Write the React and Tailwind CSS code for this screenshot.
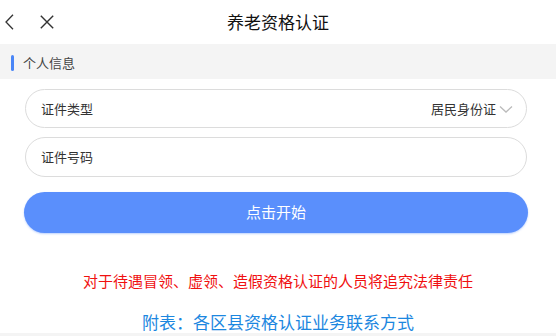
import React from 'react';

const App = () => {
  return (
    <div className="w-[556px] h-[336px] bg-white overflow-hidden flex flex-col font-['Noto_Sans_CJK_SC','Noto_Sans',sans-serif] text-[#333]">
      {/* Header */}
      <header className="h-[44px] flex items-center relative shrink-0 pl-[5px]">
        <button className="h-[44px] flex items-center">
          <svg width="9" height="16" viewBox="0 0 9 16" fill="none" stroke="#333" strokeWidth="1.3">
            <path d="M8 0.8 L1 8 L8 15.2" />
          </svg>
        </button>
        <button className="h-[44px] flex items-center ml-[26px]">
          <svg width="14" height="14" viewBox="0 0 14 14" fill="none" stroke="#333" strokeWidth="1.4">
            <path d="M0.8 0.8 L13.2 13.2 M13.2 0.8 L0.8 13.2" />
          </svg>
        </button>
        <h1 className="absolute inset-x-0 text-center text-[17px] leading-[44px] text-[#111] pointer-events-none">养老资格认证</h1>
      </header>

      {/* Section title */}
      <div className="h-[35px] bg-[#f4f4f4] flex items-center pl-[11px] pt-[2px] shrink-0">
        <span className="w-[3px] h-[16px] bg-[#4a86f7] rounded-sm"></span>
        <span className="ml-[9px] text-[13px] text-[#444]">个人信息</span>
      </div>

      {/* Form */}
      <div className="pl-[25px] pr-[29px] pt-[10px] flex flex-col">
        <div className="h-[39px] border border-[#dcdcdc] rounded-full flex items-center justify-between pl-[15px] pr-[13px] text-[13px]">
          <span>证件类型</span>
          <span className="flex items-center">
            居民身份证
            <svg width="14" height="9" viewBox="0 0 14 9" fill="none" stroke="#bbb" strokeWidth="1.3" className="ml-[3px] mt-[2px]">
              <path d="M1 1.5 L7 7 L13 1.5" />
            </svg>
          </span>
        </div>
        <div className="h-[40px] mt-[9px] border border-[#dcdcdc] rounded-full flex items-center pl-[15px] text-[13px]">
          <span>证件号码</span>
        </div>
      </div>

      <div className="pl-[24px] pr-[28px] pt-[15px]">
        <button className="w-full h-[41px] rounded-full bg-[#5a8ffc] text-white text-[15px] shadow-[0_1px_2px_rgba(90,143,252,0.4)]">
          点击开始
        </button>
      </div>

      <p className="mt-[38px] text-center text-[15px] text-[#f01010] leading-[20px]">
        对于待遇冒领、虚领、造假资格认证的人员将追究法律责任
      </p>
      <p className="mt-[20px] text-center text-[17px] text-[#1c87e0] leading-[22px]">
        附表：各区县资格认证业务联系方式
      </p>
      <div className="flex-1 bg-[#f4f4f4]"></div>
    </div>
  );
};

export default App;
